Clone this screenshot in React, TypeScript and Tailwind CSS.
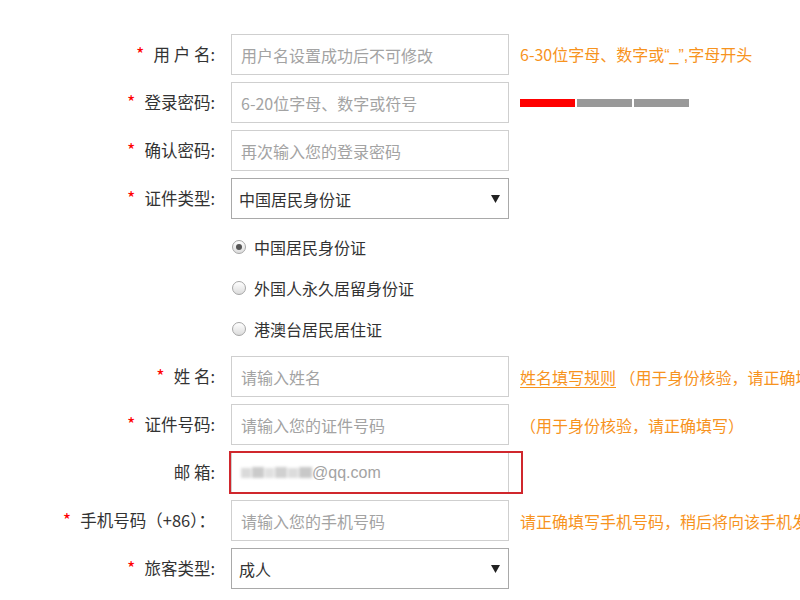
import type { ReactNode } from "react";

function Star() {
  return <span className="text-[#f00] text-[18px] leading-none mr-[9px]">*</span>;
}

function Row({
  label,
  required = true,
  children,
  hint,
}: {
  label: string;
  required?: boolean;
  children: ReactNode;
  hint?: ReactNode;
}) {
  return (
    <div className="flex items-center h-[41px] mb-[7px]">
      <div className="w-[215px] shrink-0 text-right text-[16.5px] text-[#333] whitespace-nowrap">
        {required && <Star />}
        {label}
      </div>
      <div className="ml-[16px] shrink-0 relative">{children}</div>
      {hint && (
        <div className="ml-[11px] text-[16px] text-[#f7931e] whitespace-nowrap overflow-hidden">
          {hint}
        </div>
      )}
    </div>
  );
}

function TextBox({ placeholder }: { placeholder: string }) {
  return (
    <input
      type="text"
      placeholder={placeholder}
      className="block w-[278px] h-[41px] border border-[#cfcfcf] px-[9px] text-[16px] text-[#333] placeholder:text-[#a3a3a3] outline-none"
    />
  );
}

function SelectBox({ value }: { value: string }) {
  return (
    <div className="flex items-center justify-between w-[278px] h-[41px] border border-[#a9a9a9] pl-[7px] pr-[8px] text-[16px] text-[#333]">
      <span>{value}</span>
      <svg width="9" height="8" viewBox="0 0 9 8">
        <path d="M0 0H9L4.5 8Z" fill="#222" />
      </svg>
    </div>
  );
}

function Radio({ label, checked = false }: { label: string; checked?: boolean }) {
  return (
    <div className="flex items-center h-[41px]">
      <span className="ml-[1px] w-[14px] h-[14px] rounded-full border border-[#a6a6a6] bg-gradient-to-b from-[#ffffff] to-[#dcdcdc] flex items-center justify-center">
        {checked && <span className="w-[6px] h-[6px] rounded-full bg-[#555]" />}
      </span>
      <span className="ml-[8px] text-[16px] text-[#333]">{label}</span>
    </div>
  );
}

export default function App() {
  return (
    <div className="w-[800px] h-[600px] overflow-hidden bg-white pt-[34px] font-['Microsoft_YaHei','Noto_Sans_CJK_SC',sans-serif]">
      <Row
        label="用 户 名:"
        hint={
          <>
            6-30位字母、数字或<span className="font-['Liberation_Sans',sans-serif]">“_”,</span>字母开头
          </>
        }
      >
        <TextBox placeholder="用户名设置成功后不可修改" />
      </Row>
      <Row
        label="登录密码:"
        hint={
          <div className="flex gap-[2px] pt-[1px]">
            <span className="block w-[55px] h-[8px] bg-[#f00]" />
            <span className="block w-[55px] h-[8px] bg-[#999]" />
            <span className="block w-[55px] h-[8px] bg-[#999]" />
          </div>
        }
      >
        <TextBox placeholder="6-20位字母、数字或符号" />
      </Row>
      <Row label="确认密码:">
        <TextBox placeholder="再次输入您的登录密码" />
      </Row>
      <Row label="证件类型:">
        <SelectBox value="中国居民身份证" />
      </Row>

      <div className="pl-[231px] mb-[7px]">
        <Radio label="中国居民身份证" checked />
        <Radio label="外国人永久居留身份证" />
        <Radio label="港澳台居民居住证" />
      </div>

      <Row
        label="姓 名:"
        hint={
          <>
            <span className="underline underline-offset-[3px]">姓名填写规则</span>{" "}
            （用于身份核验，请正确填写）
          </>
        }
      >
        <TextBox placeholder="请输入姓名" />
      </Row>
      <Row label="证件号码:" hint="（用于身份核验，请正确填写）">
        <TextBox placeholder="请输入您的证件号码" />
      </Row>
      <Row label="邮 箱:" required={false}>
        <div className="flex items-center w-[278px] h-[41px] border border-[#cfcfcf] px-[9px] text-[16px] text-[#a3a3a3]">
          <span className="flex items-center gap-[1px] blur-[1.5px]">
            <span className="block w-[10px] h-[10px] bg-[#dadada]" />
            <span className="block w-[12px] h-[11px] bg-[#cacaca]" />
            <span className="block w-[9px] h-[10px] bg-[#e0e0e0]" />
            <span className="block w-[12px] h-[11px] bg-[#d0d0d0]" />
            <span className="block w-[10px] h-[10px] bg-[#dcdcdc]" />
            <span className="block w-[13px] h-[11px] bg-[#c8c8c8]" />
          </span>
          <span className="font-['Liberation_Sans',sans-serif]">@qq.com</span>
        </div>
        <div className="absolute -left-[2px] -top-[1px] w-[294px] h-[43px] border-2 border-[#d0272d]" />
      </Row>
      <Row label="手机号码（+86）：" hint="请正确填写手机号码，稍后将向该手机发送短信验证码">
        <TextBox placeholder="请输入您的手机号码" />
      </Row>
      <Row label="旅客类型:">
        <SelectBox value="成人" />
      </Row>
    </div>
  );
}
